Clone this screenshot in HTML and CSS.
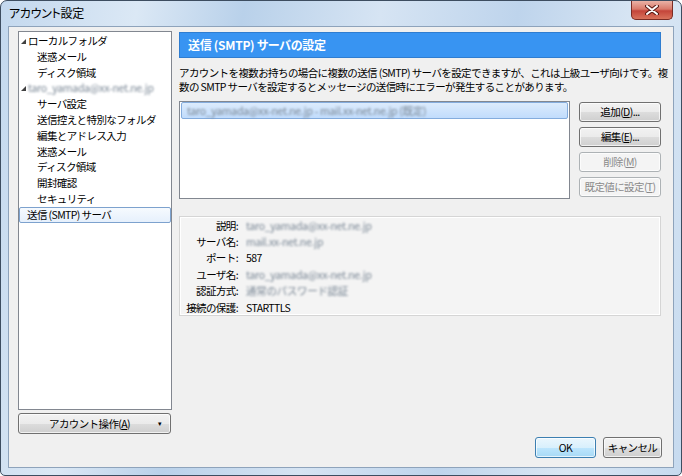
FILE: index.html
```html
<!DOCTYPE html>
<html lang="ja">
<head>
  <meta charset="UTF-8">
  <title>アカウント設定</title>
  <link rel="stylesheet" href="styles.css">
</head>
<body>

  <div class="window">
    <div class="titlebar">
      <span class="title">アカウント設定</span>
      <span class="close">
        <svg width="14" height="10" viewBox="0 0 14 10">
          <path d="M2 1 L12 9 M12 1 L2 9" stroke="#5a1a14" stroke-width="4" stroke-linecap="round"/>
          <path d="M2 1 L12 9 M12 1 L2 9" stroke="#fff" stroke-width="2" stroke-linecap="round"/>
        </svg>
      </span>
    </div>

    <div class="client">
      <div class="left">
        <ul class="tree">
          <li class="top"><span class="tri"></span>ローカルフォルダ</li>
          <li class="child">迷惑メール</li>
          <li class="child">ディスク領域</li>
          <li class="top"><span class="tri"></span><span class="blur">taro_yamada@xx-net.ne.jp</span></li>
          <li class="child">サーバ設定</li>
          <li class="child">送信控えと特別なフォルダ</li>
          <li class="child">編集とアドレス入力</li>
          <li class="child">迷惑メール</li>
          <li class="child">ディスク領域</li>
          <li class="child">開封確認</li>
          <li class="child">セキュリティ</li>
          <li class="top sel">送信 (SMTP) サーバ</li>
        </ul>
        <button class="btn account">アカウント操作(<u>A</u>)<span class="drop">▾</span></button>
      </div>

      <div class="right">
        <div class="header">送信 (SMTP) サーバの設定</div>
        <p class="desc">アカウントを複数お持ちの場合に複数の送信 (SMTP) サーバを設定できますが、これは上級ユーザ向けです。複<br>数の SMTP サーバを設定するとメッセージの送信時にエラーが発生することがあります。</p>

        <div class="servers">
          <div class="list">
            <div class="row sel"><span class="blur">taro_yamada@xx-net.ne.jp - mail.xx-net.ne.jp (既定)</span></div>
          </div>
          <div class="side">
            <button class="btn">追加(<u>D</u>)...</button>
            <button class="btn">編集(<u>E</u>)...</button>
            <button class="btn" disabled>削除(<u>M</u>)</button>
            <button class="btn" disabled>既定値に設定(<u>T</u>)</button>
          </div>
        </div>

        <div class="info">
          <span class="key">説明:</span><span class="val blur">taro_yamada@xx-net.ne.jp</span>
          <span class="key">サーバ名:</span><span class="val blur">mail.xx-net.ne.jp</span>
          <span class="key">ポート:</span><span class="val">587</span>
          <span class="key">ユーザ名:</span><span class="val blur">taro_yamada@xx-net.ne.jp</span>
          <span class="key">認証方式:</span><span class="val blur">通常のパスワード認証</span>
          <span class="key">接続の保護:</span><span class="val">STARTTLS</span>
        </div>

        <div class="footer">
          <button class="btn ok">OK</button>
          <button class="btn cancel">キャンセル</button>
        </div>
      </div>
    </div>
  </div>

</body>
</html>
```

FILE: styles.css
```css
* { box-sizing: border-box; }
body {
  margin: 0;
  background: #fff;
  font-family: "Noto Sans CJK JP", "Noto Sans", sans-serif;
  font-size: 10.5px;
  letter-spacing: -0.6px;
  color: #000;
}
.window {
  width: 682px;
  height: 476px;
  border: 1px solid #3d4d60;
  border-radius: 7px 7px 5px 5px;
  padding: 0 7px 7px 7px;
  display: flex;
  flex-direction: column;
  background: linear-gradient(100deg, #c3d8ee 0%, #dbe8f5 18%, #b9d1ea 32%, #d6e4f3 50%, #bed4ec 68%, #dae7f4 85%, #c6daef 100%);
}
.titlebar {
  height: 25px;
  display: flex;
  justify-content: space-between;
  align-items: flex-start;
}
.title { line-height: 24px; padding-left: 1px; font-size: 12px; letter-spacing: -0.3px; font-feature-settings: "palt"; }
.close {
  width: 42px;
  height: 19px;
  margin-right: 1px;
  border: 1px solid #7a2c24;
  border-top: none;
  border-radius: 0 0 5px 5px;
  background-color: #c94a3e;
  background-image: linear-gradient(#eab2a6, #d97a6a 45%, #c4453a 55%, #d9735c);
  display: flex;
  align-items: center;
  justify-content: center;
}
.client {
  flex: 1;
  border: 1px solid #8ea3bb;
  background: #f0f0f0;
  padding: 4px 12px 9px 9px;
  display: flex;
  gap: 7px;
}
.left {
  width: 154px;
  display: flex;
  flex-direction: column;
}
.tree {
  list-style: none;
  margin: 0;
  padding: 1px 0 0 0;
  height: 379px;
  background: #fff;
  border: 1px solid #828790;
}
.tree li {
  height: 15.8px;
  line-height: 15.8px;
  white-space: nowrap;
}
.tree .top { padding-left: 2px; }
.tree .child { padding-left: 18px; }
.tri {
  display: inline-block;
  width: 0;
  height: 0;
  margin-right: 2px;
  border-left: 5px solid transparent;
  border-bottom: 5px solid #404040;
  vertical-align: 1px;
}
.tree .sel {
  padding-left: 7px;
  border: 1px solid #7da2ce;
  border-radius: 2px;
  background: linear-gradient(#f6fafe, #e6f0fc);
  line-height: 14px;
}
.blur {
  color: #7b8896;
  filter: blur(1.1px);
  letter-spacing: -0.3px;
}
.btn {
  font-family: inherit;
  font-size: 10.5px;
  letter-spacing: -0.6px;
  white-space: nowrap;
  color: #000;
  height: 20px;
  padding: 0 2px;
  border: 1px solid #707070;
  border-radius: 3px;
  background: linear-gradient(#f2f2f2, #ebebeb 50%, #dddddd 50%, #cfcfcf);
  line-height: 16px;
  box-shadow: inset 0 0 0 1px rgba(255,255,255,0.7);
}
.btn:disabled {
  color: #8a8a8a;
  border-color: #adb2b5;
  background: #f4f4f4;
}
.btn u { text-underline-offset: 1px; }
.account {
  margin-top: 3px;
  height: 21px;
  width: 153px;
  position: relative;
  padding-right: 12px;
}
.drop {
  position: absolute;
  right: 9px;
  top: 1px;
  font-size: 7px;
}
.right {
  width: 482px;
  display: flex;
  flex-direction: column;
}
.header {
  margin-top: 1px;
  height: 26px;
  background: #3894f2;
  border: 1px solid #2f7dd0;
  color: #fff;
  font-weight: bold;
  font-size: 12px;
  letter-spacing: -0.3px;
  font-feature-settings: "palt";
  line-height: 23px;
  padding-left: 8px;
}
.desc {
  margin: 8px 0 0 0;
  line-height: 14px;
  white-space: nowrap;
}
.servers {
  margin-top: 7px;
  height: 98px;
  display: flex;
  gap: 9px;
}
.list {
  flex: 1;
  background: #fff;
  border: 1px solid #828790;
  padding: 0 1px;
}
.list .row {
  height: 17px;
  line-height: 15px;
  padding-left: 5px;
  border: 1px solid #84acdd;
  border-radius: 2px;
  background: linear-gradient(#dcebfc, #c1dcfc);
}
.side {
  width: 82px;
  padding-top: 1px;
  display: flex;
  flex-direction: column;
  gap: 5px;
}
.info {
  margin-top: 17px;
  height: 100px;
  border: 1px solid #d5d5d5;
  box-shadow: inset 0 0 0 1px #fff;
  background: #f4f4f4;
  display: grid;
  grid-template-columns: 58px 1fr;
  grid-auto-rows: 16.4px;
  column-gap: 8px;
  align-items: center;
}
.key { text-align: right; white-space: nowrap; }
.footer {
  margin-top: auto;
  display: flex;
  justify-content: flex-end;
  gap: 7px;
}
.footer .btn { height: 21px; width: 61px; }
.footer .cancel { width: 59px; margin-right: -1px; }
.ok {
  border-color: #3c7fb1;
  background: linear-gradient(#eaf6fd, #d9f0fc 50%, #bee6fd 50%, #a7d9f5);
}
```
